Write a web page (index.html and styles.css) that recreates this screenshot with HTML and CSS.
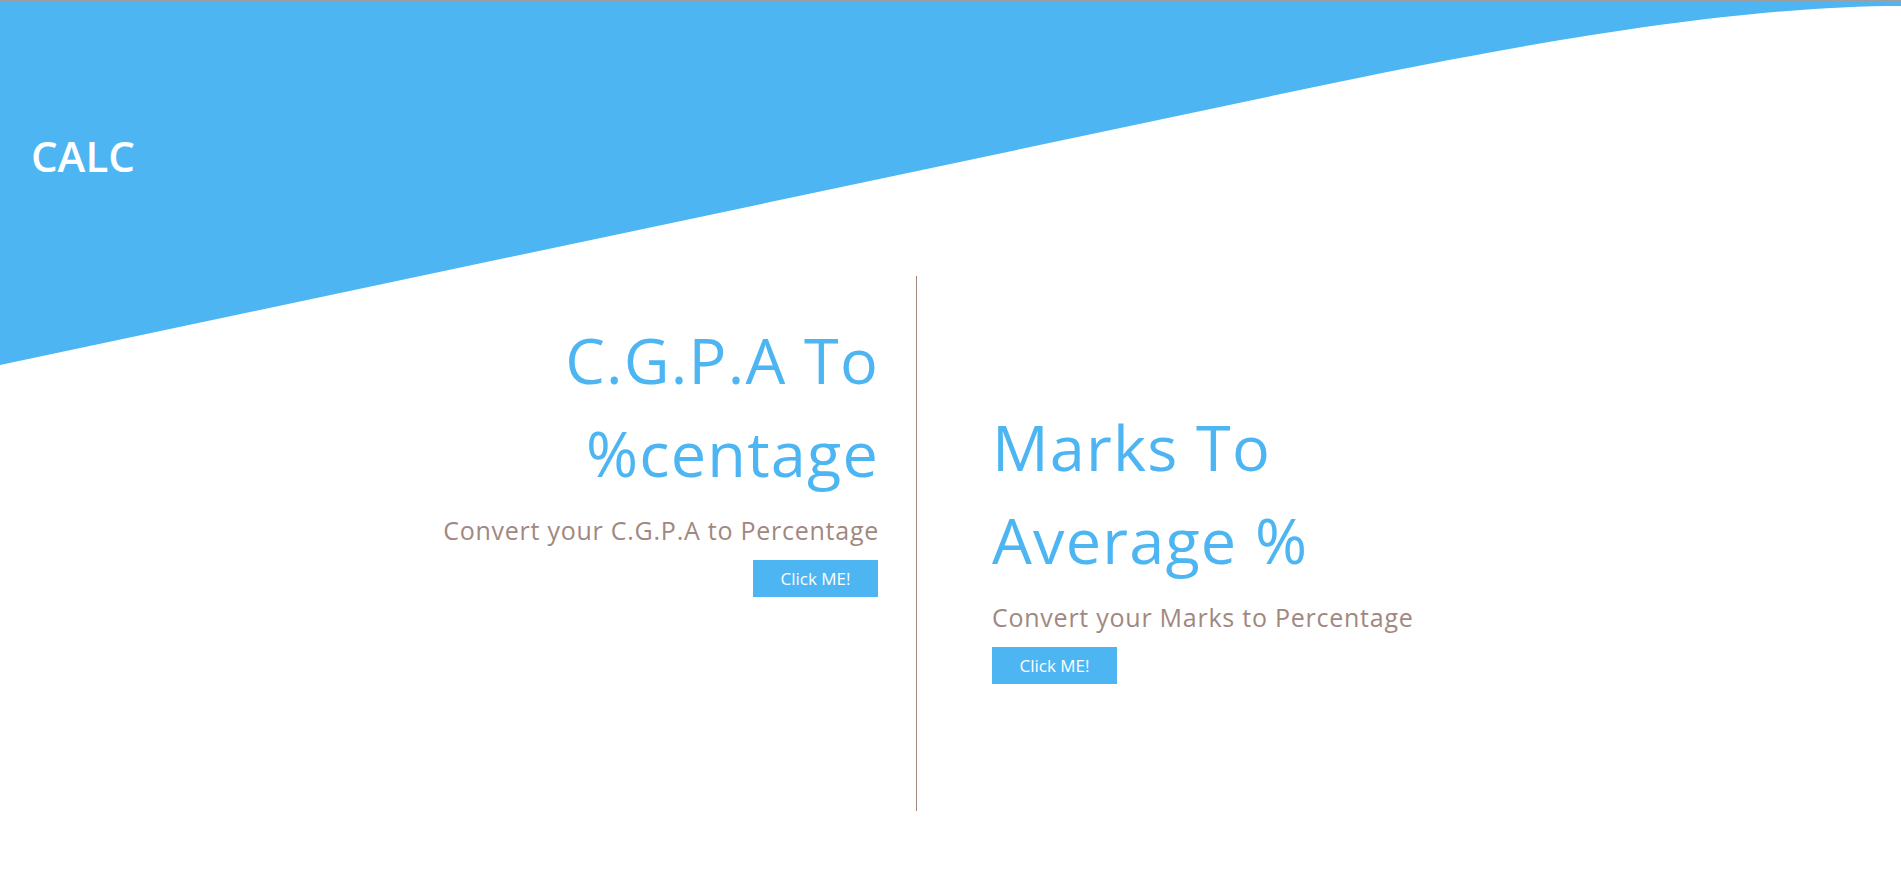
FILE: index.html
```html
<!DOCTYPE html>
<html lang="en">
<head>
<meta charset="utf-8">
<title>CALC</title>
<link rel="stylesheet" href="styles.css">
</head>
<body>
<div class="topbar"></div>
<div class="page">
  <svg class="wave" viewBox="0 0 1901 366" preserveAspectRatio="none" aria-hidden="true">
    <path d="M0,0 L1901,0 L1901,4 C1750,4 1550,35 1300,88 L0,363 Z" fill="#4db6f2"/>
  </svg>
  <header class="brand">CALC</header>
  <main class="cards">
    <section class="card card-left">
      <h2 class="card-title">C.G.P.A To<br>%centage</h2>
      <p class="card-text">Convert your C.G.P.A to Percentage</p>
      <button class="card-btn" type="button">Click ME!</button>
    </section>
    <div class="divider"></div>
    <section class="card card-right">
      <h2 class="card-title">Marks To<br>Average %</h2>
      <p class="card-text">Convert your Marks to Percentage</p>
      <button class="card-btn" type="button">Click ME!</button>
    </section>
  </main>
</div>
</body>
</html>
```

FILE: styles.css
```css
html, body {
  margin: 0;
  padding: 0;
  background: #ffffff;
}

body {
  font-family: "Open Sans", "Noto Sans", sans-serif;
  overflow: hidden;
}

.topbar {
  height: 2px;
  background: #9e9e9e;
}

.page {
  position: relative;
  width: 1901px;
  height: 885px;
}

.wave {
  position: absolute;
  top: 0;
  left: 0;
  width: 1901px;
  height: 366px;
  display: block;
  z-index: 0;
}

.brand {
  position: relative;
  z-index: 1;
  padding: 129px 0 0 31px;
  font-size: 42px;
  line-height: 50px;
  font-weight: 600;
  color: #ffffff;
}

.cards {
  position: relative;
  z-index: 1;
  display: flex;
  height: 535px;
  margin-top: 95px;
}

.card {
  display: flex;
  flex-direction: column;
}

.card-left {
  width: 878px;
  align-items: flex-end;
  text-align: right;
  padding-top: 37px;
}

.card-right {
  margin-left: 75px;
  align-items: flex-start;
  text-align: left;
  padding-top: 124px;
}

.divider {
  width: 1px;
  margin-left: 38px;
  background: #a1887f;
}

.card-title {
  margin: 0;
  font-size: 63px;
  line-height: 93px;
  font-weight: 400;
  letter-spacing: 1.2px;
  color: #4db6f2;
}

.card-left .card-title {
  margin-right: -1px;
}

.card-text {
  margin: 13px 0 0 0;
  font-size: 25px;
  line-height: 36px;
  letter-spacing: 0.75px;
  color: #a1887f;
}

.card-left .card-text {
  margin-right: -1px;
}

.card-btn {
  margin-top: 12px;
  width: 125px;
  height: 37px;
  padding: 0;
  border: none;
  background: #4db6f2;
  color: #ffffff;
  font-family: "Open Sans", "Noto Sans", sans-serif;
  font-size: 17px;
  cursor: pointer;
}
```
